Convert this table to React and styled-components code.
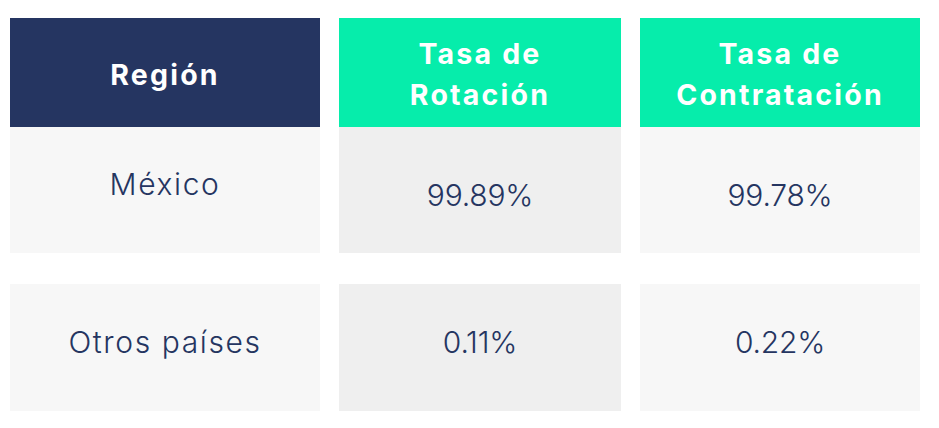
import React from 'react';
import styled, { createGlobalStyle } from 'styled-components';

const GlobalStyle = createGlobalStyle`
  body {
    margin: 0;
    background: #ffffff;
    font-family: Inter, "Noto Sans", sans-serif;
  }
`;

const Table = styled.div`
  display: flex;
  flex-direction: column;
  padding: 18px 0 0 10px;
`;

const Row = styled.div`
  display: grid;
  grid-template-columns: 310px 282px 280px;
  column-gap: 19px;
  height: ${(p) => p.$height}px;
  margin-top: ${(p) => p.$space || 0}px;
`;

const HeadCell = styled.div`
  display: flex;
  align-items: center;
  justify-content: center;
  text-align: center;
  background: ${(p) => (p.$dark ? '#253561' : '#06edab')};
  color: #ffffff;
  font-size: 28.5px;
  font-weight: 700;
  line-height: 41px;
  letter-spacing: 2.2px;
  padding-top: 3px;
`;

const Cell = styled.div`
  display: flex;
  align-items: center;
  justify-content: center;
  background: ${(p) => (p.$shade ? '#efefef' : '#f7f7f7')};
  color: #253561;
  font-size: 30px;
  font-weight: 300;
  letter-spacing: ${(p) => (p.$num ? '-0.2px' : '1.6px')};
  padding-bottom: ${(p) => p.$lift || 0}px;
  padding-top: ${(p) => p.$drop || 0}px;
`;

const rows = [
  { region: 'México', rot: '99.89%', con: '99.78%', height: 126, space: 0, lift: 12, numLift: -9 },
  { region: 'Otros países', rot: '0.11%', con: '0.22%', height: 127, space: 31, lift: 12, numLift: 12 },
];

export default function App() {
  return (
    <>
      <GlobalStyle />
      <Table>
        <Row $height={109}>
          <HeadCell $dark>Región</HeadCell>
          <HeadCell>Tasa de<br />Rotación</HeadCell>
          <HeadCell>Tasa de<br />Contratación</HeadCell>
        </Row>
        {rows.map((r) => {
          const lift = Math.max(r.numLift, 0);
          const drop = Math.max(-r.numLift, 0);
          return (
            <Row key={r.region} $height={r.height} $space={r.space}>
              <Cell $lift={r.lift}>{r.region}</Cell>
              <Cell $num $shade $lift={lift} $drop={drop}>{r.rot}</Cell>
              <Cell $num $lift={lift} $drop={drop}>{r.con}</Cell>
            </Row>
          );
        })}
      </Table>
    </>
  );
}
